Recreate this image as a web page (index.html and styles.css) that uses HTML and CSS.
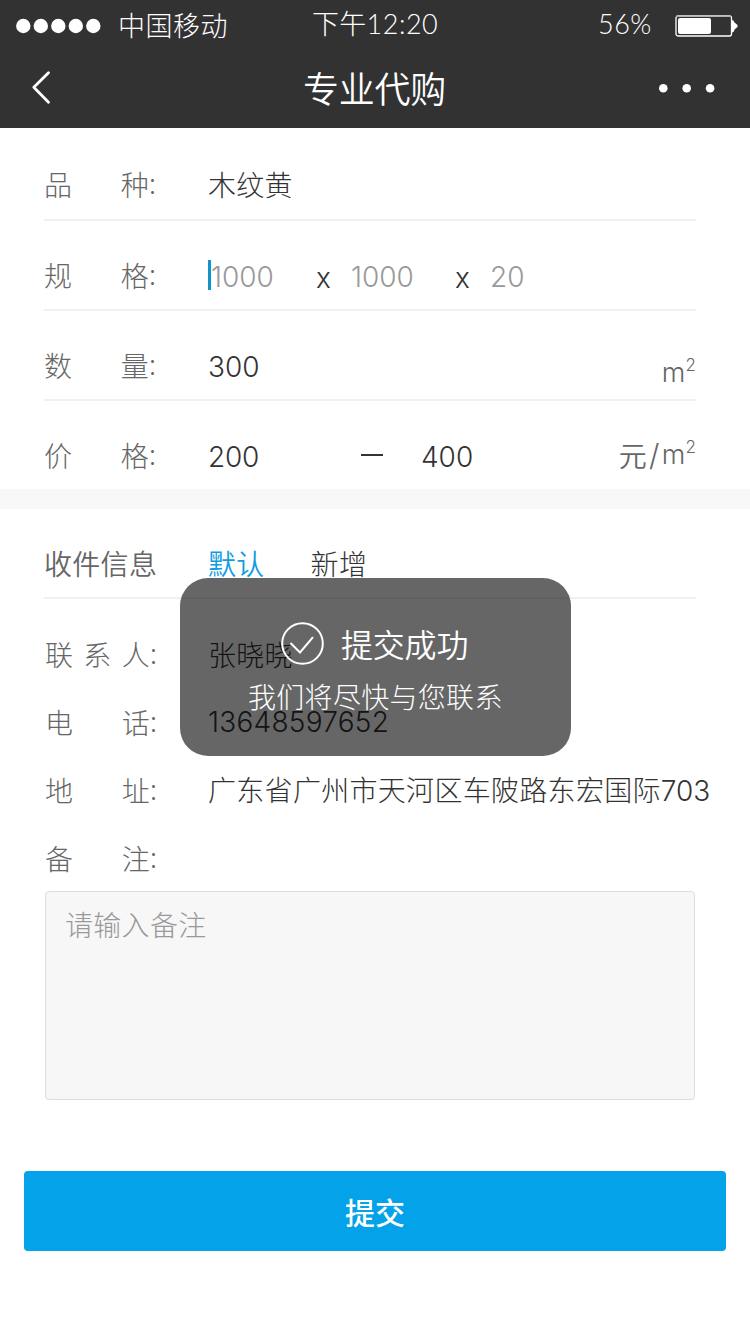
FILE: index.html
```html
<!DOCTYPE html>
<html lang="zh-CN">
<head>
<meta charset="utf-8">
<title>专业代购</title>
<link rel="stylesheet" href="styles.css">
</head>
<body>
<div class="screen">
  <header class="top">
    <div class="status">
      <svg class="signal" width="86" height="16" viewBox="0 0 86 16" fill="#fff"><circle cx="7.3" cy="8" r="7.2"/><circle cx="24.8" cy="8" r="7.2"/><circle cx="42.3" cy="8" r="7.2"/><circle cx="59.8" cy="8" r="7.2"/><circle cx="77.3" cy="8" r="7.2"/></svg>
      <span class="carrier">中国移动</span>
      <span class="time">下午<span class="clock">12:20</span></span>
      <span class="percent">56%</span>
      <svg class="battery" width="63" height="22" viewBox="0 0 63 22"><rect x="1" y="1" width="55.5" height="20" rx="2" fill="none" stroke="#fff" stroke-width="1.3"/><path d="M1 1.2h55" stroke="#b5afb0" stroke-width="1.4"/><rect x="3" y="3" width="33" height="16" rx="2" fill="#fff"/><path d="M57 5q2 0 2.500 2.500l3 2.500v2l-3 2.500q-.5 3-2.500 3z" fill="#fff"/></svg>
    </div>
    <nav class="nav">
      <svg class="back" width="22" height="36" viewBox="0 0 22 36" fill="none" stroke="#fff" stroke-width="2.800" stroke-linecap="round" stroke-linejoin="round"><path d="M18.500 2.800 3.800 17.300 18.500 32.300"/></svg>
      <h1 class="title">专业代购</h1>
      <svg class="more" width="56" height="10" viewBox="0 0 56 10" fill="#fff"><circle cx="4.300" cy="5.300" r="4.300"/><circle cx="27.700" cy="5.300" r="4.300"/><circle cx="51.100" cy="5.300" r="4.300"/></svg>
    </nav>
  </header>

  <main>
    <section class="group goods">
      <div class="row">
        <div class="label"><span class="spread"><span>品</span><span>种</span></span><span class="colon">:</span></div>
        <div class="value">木纹黄</div>
      </div>
      <div class="row">
        <div class="label"><span class="spread"><span>规</span><span>格</span></span><span class="colon">:</span></div>
        <div class="value sizes"><span class="caret"></span><span class="num hint length">1000</span><span class="times">x</span><span class="num hint width">1000</span><span class="times">x</span><span class="num hint">20</span></div>
      </div>
      <div class="row">
        <div class="label"><span class="spread"><span>数</span><span>量</span></span><span class="colon">:</span></div>
        <div class="value num">300</div>
        <div class="unit unit-low">m<span class="power">2</span></div>
      </div>
      <div class="row">
        <div class="label"><span class="spread"><span>价</span><span>格</span></span><span class="colon">:</span></div>
        <div class="value range"><span class="num from">200</span><span class="dash"></span><span class="num">400</span></div>
        <div class="unit"><span class="yuan">元</span><span class="slash">/</span>m<span class="power">2</span></div>
      </div>
    </section>

    <section class="group receiver">
      <div class="row">
        <div class="label heading">收件信息</div>
        <div class="value tabs"><span class="tab active">默认</span><span class="tab">新增</span></div>
      </div>
    </section>

    <section class="contact">
      <div class="line">
        <div class="label"><span class="spread"><span>联</span><span>系</span><span>人</span></span><span class="colon">:</span></div>
        <div class="value">张晓晓</div>
      </div>
      <div class="line">
        <div class="label"><span class="spread"><span>电</span><span>话</span></span><span class="colon">:</span></div>
        <div class="value num phone">13648597652</div>
      </div>
      <div class="line">
        <div class="label"><span class="spread"><span>地</span><span>址</span></span><span class="colon">:</span></div>
        <div class="value address">广东省广州市天河区车陂路东宏国际<span class="num">703</span></div>
      </div>
      <div class="line">
        <div class="label"><span class="spread"><span>备</span><span>注</span></span><span class="colon">:</span></div>
      </div>
      <div class="note">请输入备注</div>
    </section>
    <div class="submit">提交</div>
  </main>

  <div class="toast">
    <div class="toast-head">
      <svg width="44" height="44" viewBox="0 0 44 44" fill="none" stroke="#fff" stroke-width="2"><circle cx="22.500" cy="21.500" r="20.300"/><path d="M10.500 21 20 30.500 33 15.200"/></svg>
      <span class="toast-title">提交成功</span>
    </div>
    <div class="toast-text">我们将尽快与您联系</div>
  </div>
</div>
</body>
</html>
```
FILE: styles.css
```css
* { box-sizing: border-box; }
body {
  margin: 0;
  background: #fff;
  font-family: "Noto Sans CJK SC", sans-serif;
  font-size: 28px;
  font-weight: 300;
  line-height: 40px;
  letter-spacing: 0.3px;
  color: #333;
}
svg { display: block; flex: none; }
.screen { position: relative; width: 750px; height: 1334px; overflow: hidden; white-space: nowrap; }

.top { height: 128px; background: #323232; color: #fff; }
.status { display: flex; align-items: center; height: 48px; padding: 3px 11px 0 16px; }
.carrier { width: 194px; margin-left: 16px; padding-bottom: 2px; font-size: 27px; letter-spacing: 0.5px; }
.time { width: 286px; padding-bottom: 4px; font-size: 27px; }
.clock, .percent { font-family: Lato, sans-serif; font-size: 27px; font-weight: 300; letter-spacing: 0.5px; }
.percent { width: 77px; padding-bottom: 4px; }
.nav { display: flex; align-items: center; justify-content: space-between; height: 80px; padding: 0 35px 0 30px; }
.title { margin: 0 0 2px; padding-left: 38px; font-size: 36px; font-weight: 350; line-height: 52px; letter-spacing: -0.3px; }

.group { padding: 0 54px 0 44px; }
.goods { height: 381px; border-bottom: 20px solid #f8f8f8; }
.row { display: flex; align-items: center; height: 90px; padding-top: 20px; border-bottom: 2px solid #f0f0f0; }
.goods .row:first-child { height: 93px; }
.goods .row:last-child { height: 88px; border: 0; }
.label { display: flex; width: 164px; flex: none; color: #666; }
.spread { display: flex; justify-content: space-between; width: 105px; }
.colon { margin-top: -2px; }
.heading { font-weight: 350; }
.num { font-family: Inter, "Liberation Sans", sans-serif; font-weight: 300; font-size: 28px; letter-spacing: 0; }
.row .num { padding-top: 3px; }
.sizes, .range { display: flex; align-items: center; }
.caret { width: 3px; height: 30px; background: #1094ca; }
.hint { color: #999; }
.length { width: 105px; }
.width { width: 104px; }
.times { width: 35px; padding-top: 5px; font-family: Inter, sans-serif; }
.from { width: 153px; letter-spacing: -0.2px; }
.dash { width: 22px; height: 2px; margin-right: 38px; background: #333; }
.unit { display: flex; margin-left: auto; font-family: Inter, sans-serif; font-size: 27px; color: #666; }
.unit-low { padding-top: 15px; }
.power { font-size: 17px; line-height: 25px; letter-spacing: 0; }
.yuan { margin-left: -1px; font-family: "Noto Sans CJK SC", sans-serif; font-size: 28px; font-weight: 350; }
.slash { margin: 0 2px; font-size: 30px; }
.tabs { display: flex; gap: 46px; }
.active { color: #109de0; font-weight: 350; }

.contact { padding: 21px 38px 0 45px; }
.line { display: flex; align-items: center; height: 68px; }
.line .label { width: 163px; }
.phone { letter-spacing: 0.25px; }
.note { width: 650px; height: 209px; margin-top: -1px; padding: 12px 19px; background: #f7f7f7; border: 1px solid #ddd; border-radius: 4px; color: #999; }
.submit { height: 80px; margin: 71px 24px 0; background: #04a2e8; border-radius: 4px; color: #fff; font-size: 30px; font-weight: 500; line-height: 80px; text-align: center; letter-spacing: 0; }

.toast { position: absolute; left: 180px; top: 578px; width: 391px; height: 178px; padding: 43px 0 0; border-radius: 28px; background: rgba(0, 0, 0, 0.6); color: #fff; }
.toast-head { display: flex; align-items: center; height: 46px; padding-left: 100px; }
.toast-title { margin: 0 0 2px 17px; font-size: 32px; font-weight: 350; letter-spacing: -0.2px; }
.toast-text { margin-top: 9px; padding-left: 68px; letter-spacing: 0.3px; }
```
